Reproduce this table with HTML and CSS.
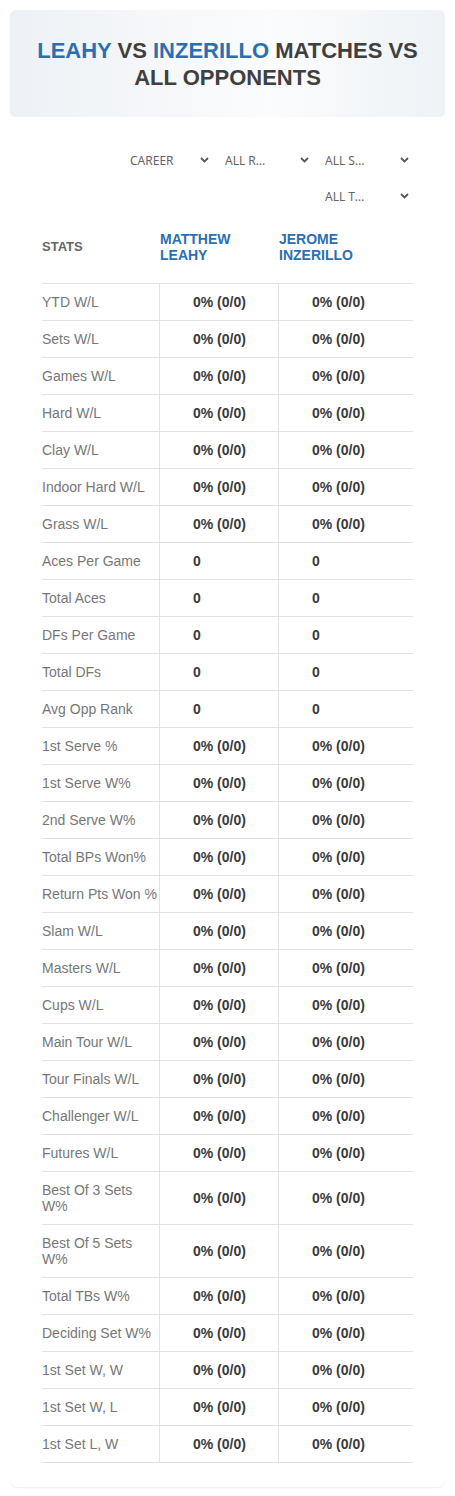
FILE: index.html
```html
<!DOCTYPE html>
<html lang="en">
<head>
    <meta charset="UTF-8">
    <meta name="viewport" content="width=device-width, initial-scale=1.0">
    <title>Leahy vs Inzerillo</title>
    <link rel="stylesheet" href="styles.css">
</head>
<body>
    <div class="page-head">
        <h1><span class="name">LEAHY</span> VS <span class="name">INZERILLO</span> MATCHES VS ALL OPPONENTS</h1>
    </div>

    <div class="card">
        <div class="filters">
            <div class="filter filter-short">
                <span class="filter-label">CAREER</span>
                <svg class="chevron" width="9" height="6" viewBox="0 0 9 6"><polyline points="1,1 4.5,4.5 8,1" fill="none" stroke="#555" stroke-width="1.8"/></svg>
            </div>
            <div class="filter">
                <span class="filter-label">ALL ROUNDS</span>
                <svg class="chevron" width="9" height="6" viewBox="0 0 9 6"><polyline points="1,1 4.5,4.5 8,1" fill="none" stroke="#555" stroke-width="1.8"/></svg>
            </div>
            <div class="filter">
                <span class="filter-label">ALL SURFACES</span>
                <svg class="chevron" width="9" height="6" viewBox="0 0 9 6"><polyline points="1,1 4.5,4.5 8,1" fill="none" stroke="#555" stroke-width="1.8"/></svg>
            </div>
            <div class="filter">
                <span class="filter-label">ALL TOURNAMENTS</span>
                <svg class="chevron" width="9" height="6" viewBox="0 0 9 6"><polyline points="1,1 4.5,4.5 8,1" fill="none" stroke="#555" stroke-width="1.8"/></svg>
            </div>
        </div>

        <div class="stats">
            <div class="stats-head">
                <div class="head-stats">STATS</div>
                <div class="head-player">MATTHEW<br>LEAHY</div>
                <div class="head-player">JEROME<br>INZERILLO</div>
            </div>
            <div id="rows"></div>
        </div>
    </div>

    <script>
        // stat rows, both players have no matches yet
        const pct = "0% (0/0)";
        const stats = [
            ["YTD W/L", pct], ["Sets W/L", pct], ["Games W/L", pct], ["Hard W/L", pct],
            ["Clay W/L", pct], ["Indoor Hard W/L", pct], ["Grass W/L", pct],
            ["Aces Per Game", "0"], ["Total Aces", "0"], ["DFs Per Game", "0"],
            ["Total DFs", "0"], ["Avg Opp Rank", "0"],
            ["1st Serve %", pct], ["1st Serve W%", pct], ["2nd Serve W%", pct],
            ["Total BPs Won%", pct], ["Return Pts Won %", pct], ["Slam W/L", pct],
            ["Masters W/L", pct], ["Cups W/L", pct], ["Main Tour W/L", pct],
            ["Tour Finals W/L", pct], ["Challenger W/L", pct], ["Futures W/L", pct],
            ["Best Of 3 Sets W%", pct], ["Best Of 5 Sets W%", pct], ["Total TBs W%", pct],
            ["Deciding Set W%", pct], ["1st Set W, W", pct], ["1st Set W, L", pct],
            ["1st Set L, W", pct]
        ];

        let html = "";
        stats.forEach(function(s) {
            html += '<div class="stat-row">' +
                '<div class="stat-label">' + s[0] + '</div>' +
                '<div class="stat-value">' + s[1] + '</div>' +
                '<div class="stat-value">' + s[1] + '</div>' +
                '</div>';
        });
        document.getElementById("rows").innerHTML = html;
    </script>
</body>
</html>
```

FILE: styles.css
```css
body {
    margin: 0;
    font-family: "Liberation Sans", Arial, sans-serif;
    background: #fff;
    color: #333;
}

.page-head {
    margin: 10px 10px 0;
    height: 107px;
    display: flex;
    align-items: center;
    justify-content: center;
    border-radius: 6px;
    background: linear-gradient(90deg, #edf1f5 0%, #f8f9fb 45%, #fbfcfd 60%, #eef2f6 100%);
    box-shadow: 0 1px 2px rgba(0, 0, 0, 0.04);
}

.page-head h1 {
    margin: 0;
    padding: 0 20px;
    font-size: 22px;
    line-height: 27px;
    font-weight: bold;
    text-align: center;
    color: #3f3f3f;
}

.page-head .name {
    color: #2b6fb1;
}

.card {
    margin: 0 10px 10px;
    padding: 25px 32px 24px;
    background: #fff;
    border-radius: 0 0 8px 8px;
    box-shadow: 0 1px 2px rgba(0, 0, 0, 0.07);
}

/* dropdown filters */
.filters {
    display: flex;
    flex-wrap: wrap;
    justify-content: flex-end;
}

.filter {
    width: 100px;
    height: 36px;
    box-sizing: border-box;
    padding: 0 4px 0 12px;
    display: flex;
    align-items: center;
    font-family: "Noto Sans", Roboto, sans-serif;
    font-size: 12px;
    color: #666;
}

.filter-short {
    width: 95px;
}

.filter-label {
    width: 46px;
    white-space: nowrap;
    overflow: hidden;
    text-overflow: ellipsis;
}

.chevron {
    margin-left: auto;
}

/* stats table */
.stat-row,
.stats-head {
    display: grid;
    grid-template-columns: 117px 119px 1fr;
    border-bottom: 1px solid #e3e3e3;
}

.stats-head {
    min-height: 65px;
    padding-bottom: 4px;
    align-items: center;
}

.head-stats {
    font-size: 13px;
    font-weight: bold;
    color: #666;
}

.head-player {
    padding-left: 1px;
    font-size: 14px;
    line-height: 16px;
    font-weight: bold;
    color: #2b6fb1;
}

.stat-row {
    align-items: stretch;
}

.stat-label {
    padding: 10px 0;
    font-size: 14px;
    line-height: 16px;
    color: #777;
}

.stat-value {
    display: flex;
    align-items: center;
    padding-left: 33px;
    border-left: 1px solid #e3e3e3;
    font-size: 14px;
    line-height: 16px;
    font-weight: bold;
    color: #3a3a3a;
}
```
